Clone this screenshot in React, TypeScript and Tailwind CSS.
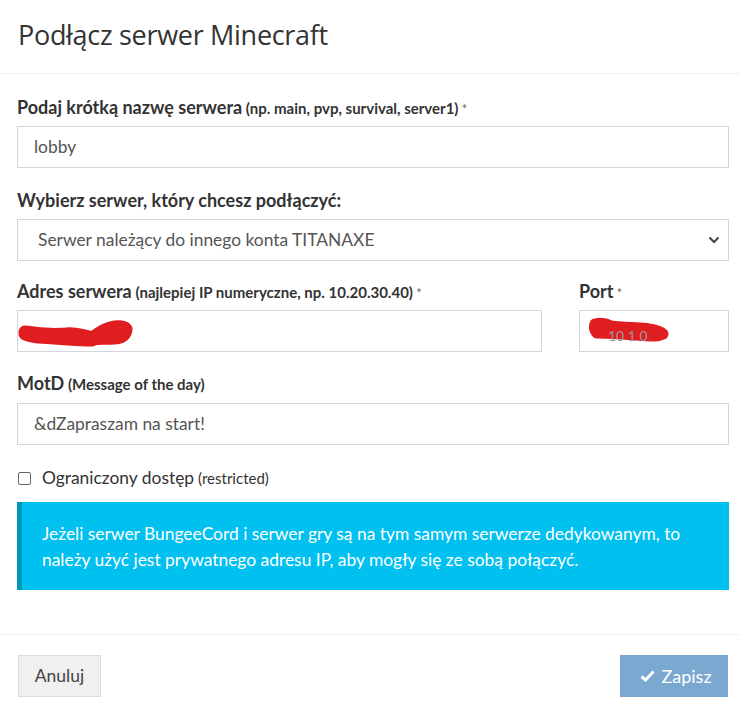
import React from "react";

const Label = ({ main, hint, required }: { main: string; hint?: string; required?: boolean }) => (
  <div className="h-[20px] leading-[20px] mb-[9px] text-[#333] whitespace-nowrap">
    <span className="font-bold text-[18px]">{main}</span>
    {hint && <span className="font-bold text-[15px]"> {hint}</span>}
    {required && <span className="text-[13px] text-[#666]"> *</span>}
  </div>
);

const Field = ({
  children,
  className = "",
  pad = "px-[16px]",
}: {
  children?: React.ReactNode;
  className?: string;
  pad?: string;
}) => (
  <div
    className={`h-[42px] border border-[#d2d6de] bg-white flex items-center text-[17.4px] text-[#555] ${pad} ${className}`}
  >
    {children}
  </div>
);

const Scribble = ({ w, h, d, sw }: { w: number; h: number; d: string; sw: number }) => (
  <svg width={w} height={h} viewBox={`0 0 ${w} ${h}`} className="block">
    <path d={d} fill="none" stroke="#e01e22" strokeWidth={sw} strokeLinecap="round" strokeLinejoin="round" />
  </svg>
);

export default function App() {
  return (
    <div className="w-[740px] h-[712px] bg-white font-['Lato',sans-serif] text-[#333]">
      <div className="h-[74px] border-b border-[#f0f0f0] pl-[18px] flex items-center">
        <h2 className="text-[27px] font-['Open_Sans',sans-serif] text-[#333] tracking-[-0.3px] pb-[2px]">
          Podłącz serwer Minecraft
        </h2>
      </div>

      <div className="pl-[17px] pr-[11px] pt-[23px] pb-[44px]">
        <Label main="Podaj krótką nazwę serwera" hint="(np. main, pvp, survival, server1)" required />
        <Field>lobby</Field>

        <div className="mt-[22px]">
          <Label main="Wybierz serwer, który chcesz podłączyć:" />
          <Field pad="pl-[20px] pr-[8px]" className="justify-between">
            <span>Serwer należący do innego konta TITANAXE</span>
            <svg width="12" height="8" viewBox="0 0 12 8">
              <path d="M1.5 1.5 L6 6 L10.5 1.5" fill="none" stroke="#444" strokeWidth="2" />
            </svg>
          </Field>
        </div>

        <div className="mt-[20px] flex gap-[37px]">
          <div className="w-[525px]">
            <Label main="Adres serwera" hint="(najlepiej IP numeryczne, np. 10.20.30.40)" required />
            <Field pad="px-0">
              <Scribble
                w={118}
                h={34}
                sw={13}
                d="M7 18 C20 20 35 21 48 20 C58 19 66 22 75 24 C80 20 84 16 92 14 C100 12 106 13 108 15 C108 20 104 24 96 24 C86 25 80 23 74 26 C60 26 40 24 20 23 C12 22 8 21 7 20"
              />
            </Field>
          </div>
          <div className="w-[150px]">
            <Label main="Port" required />
            <Field pad="pl-[7px] pr-0" className="relative">
              <span className="absolute left-[28px] top-[14px] text-[#999] text-[14px]">10 1 0</span>
              <Scribble
                w={84}
                h={30}
                sw={11}
                d="M8 8 C12 7 18 7 24 10 C38 12 52 11 62 13 C70 14 74 16 76 18 C70 21 60 20 48 19 C34 18 20 17 10 17 C7 14 7 11 8 8"
              />
            </Field>
          </div>
        </div>

        <div className="mt-[21px]">
          <div className="h-[20px] leading-[20px] mb-[10px] whitespace-nowrap">
            <span className="font-bold text-[18px]">MotD</span>
            <span className="font-bold text-[15px]"> (Message of the day)</span>
          </div>
          <Field>&amp;dZapraszam na start!</Field>
        </div>

        <div className="mt-[23px] flex items-center h-[20px]">
          <span className="w-[13px] h-[13px] border border-[#666] rounded-[2px] bg-white ml-[1px]" />
          <span className="ml-[11px] text-[17.4px] text-[#333]">Ograniczony dostęp</span>
          <span className="ml-[4px] text-[15px] text-[#333]">(restricted)</span>
        </div>

        <div className="mt-[14px] h-[88px] bg-[#00c0ef] border-l-[5px] border-[#0097bc] pl-[20px] pr-[10px] py-[19px] text-white text-[17.4px] leading-[26px] whitespace-nowrap">
          Jeżeli serwer BungeeCord i serwer gry są na tym samym serwerze dedykowanym, to
          <br />
          należy użyć jest prywatnego adresu IP, aby mogły się ze sobą połączyć.
        </div>
      </div>

      <div className="border-t border-[#f0f0f0] pl-[18px] pr-[12px] pt-[20px] flex justify-between">
        <button className="h-[42px] w-[83px] bg-[#f0f0f0] border border-[#dcdcdc] text-[#444] text-[17.5px]">
          Anuluj
        </button>
        <button className="h-[42px] w-[108px] bg-[#7aa8d0] text-white text-[18px] flex items-center justify-center gap-[6px] pl-[4px]">
          <svg width="15" height="12" viewBox="0 0 15 12">
            <path d="M1.5 6.5 L5.5 10 L13.5 1.5" fill="none" stroke="#fff" strokeWidth="3" />
          </svg>
          Zapisz
        </button>
      </div>
    </div>
  );
}
